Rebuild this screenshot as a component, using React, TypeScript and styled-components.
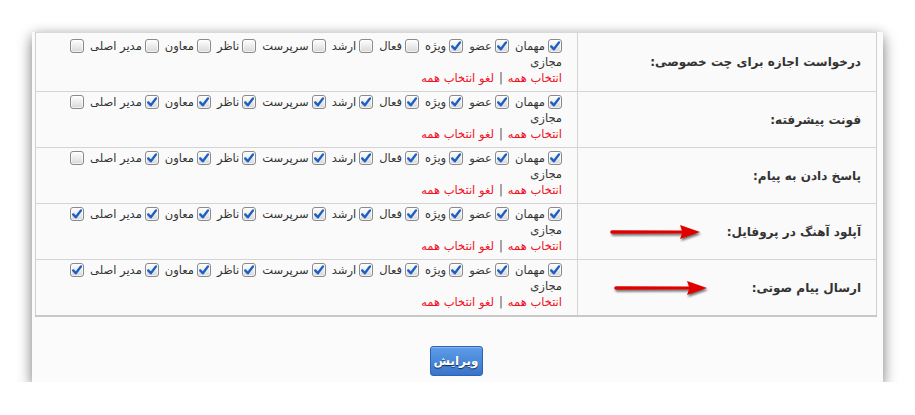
import React from 'react';
import styled, { createGlobalStyle } from 'styled-components';

const GlobalStyle = createGlobalStyle`
    html, body {
        margin: 0;
        padding: 0;
        background: #ffffff;
    }
    body {
        font-family: 'DejaVu Sans', Tahoma, sans-serif;
        font-size: 12px;
        color: #333;
    }
`;

const roles = [
    'مهمان',
    'عضو',
    'ویژه',
    'فعال',
    'ارشد',
    'سرپرست',
    'ناظر',
    'معاون',
    'مدیر اصلی',
    'مجازی',
];

interface PermissionRow {
    title: string;
    checked: boolean[];
    arrow?: { left: number; width: number };
}

const all = (except: number[] = []) => roles.map((_, i) => !except.includes(i));

const rows: PermissionRow[] = [
    {
        title: 'درخواست اجازه برای چت خصوصی:',
        checked: [true, true, true, false, false, false, false, false, false, false],
    },
    { title: 'فونت پیشرفته:', checked: all([9]) },
    { title: 'پاسخ دادن به پیام:', checked: all([9]) },
    { title: 'آپلود آهنگ در پروفایل:', checked: all(), arrow: { left: 31, width: 93 } },
    { title: 'ارسال پیام صوتی:', checked: all(), arrow: { left: 35, width: 96 } },
];

const CheckBox = ({ checked }: { checked: boolean }) => (
    <Box>
        {checked && (
            <svg width="12" height="12" viewBox="0 0 12 12">
                <path
                    d="M2.2 6.4 L4.8 9.3 L10 2.4"
                    fill="none"
                    stroke="#1c5fc4"
                    strokeWidth="2.4"
                    strokeLinecap="round"
                    strokeLinejoin="round"
                />
            </svg>
        )}
    </Box>
);

const Arrow = ({ left, width }: { left: number; width: number }) => (
    <ArrowWrap $left={left} $width={width}>
        <svg width={width} height="20" viewBox={`0 0 ${width} 20`}>
            <path
                d={`M3 8.2 L${width - 20} 8.6 L${width - 22} 3 L${width - 2} 10 L${width - 22} 17 L${width - 20} 11.4 L3 11.8 A1.8 1.8 0 0 1 3 8.2 Z`}
                fill="#e10000"
            />
        </svg>
    </ArrowWrap>
);

export default function App() {
    return (
        <Page>
            <GlobalStyle />
            <Panel>
                <Table>
                    <tbody>
                        {rows.map((row, r) => (
                            <Row key={r}>
                                <LabelCell $first={r === 0}>
                                    {row.title}
                                    {row.arrow && <Arrow {...row.arrow} />}
                                </LabelCell>
                                <OptionsCell $first={r === 0}>
                                    <Options>
                                        {roles.map((role, i) => (
                                            <React.Fragment key={role}>
                                                <CheckBox checked={row.checked[i]} />
                                                <RoleName $break={i === roles.length - 1}>
                                                    {role}
                                                </RoleName>
                                            </React.Fragment>
                                        ))}
                                    </Options>
                                    <Links>
                                        <RedLink>انتخاب همه</RedLink>
                                        <Sep>|</Sep>
                                        <RedLink>لغو انتخاب همه</RedLink>
                                    </Links>
                                </OptionsCell>
                            </Row>
                        ))}
                    </tbody>
                </Table>
                <Footer>
                    <EditButton>ویرایش</EditButton>
                </Footer>
            </Panel>
        </Page>
    );
}

const Page = styled.div`
    padding: 32px 32px 0 32px;
    direction: rtl;
`;

const Panel = styled.div`
    width: 851px;
    box-sizing: border-box;
    padding: 0 6px 0 3px;
    background: #fbfbfb;
    box-shadow: 0 6px 14px rgba(0, 0, 0, 0.45), 0 0 10px rgba(0, 0, 0, 0.12);
`;

const Table = styled.table`
    width: 842px;
    border-collapse: collapse;
    table-layout: fixed;
    background: #fafafa;
    border: 1px solid #cfcfcf;
    border-top-color: #d8d8d8;
    border-bottom: 2px solid #c8c8c8;
`;

const Row = styled.tr`
    & + & td {
        border-top: 1px solid #d4d4d4;
    }
`;

const LabelCell = styled.td<{ $first: boolean }>`
    position: relative;
    width: 283px;
    height: ${({ $first }) => ($first ? 58 : 55)}px;
    padding: 0 15px 0 0;
    border-left: 1px solid #d4d4d4;
    text-align: right;
    vertical-align: middle;
    font-weight: bold;
    font-size: 12px;
    color: #333;
    white-space: nowrap;
`;

const OptionsCell = styled.td<{ $first: boolean }>`
    padding: ${({ $first }) => ($first ? 5 : 2)}px 15px 4px 0;
    vertical-align: top;
    text-align: right;
`;

const Options = styled.div`
    display: flex;
    flex-wrap: wrap;
    align-items: center;
    line-height: 16px;
`;

const Box = styled.span`
    display: inline-flex;
    align-items: center;
    justify-content: center;
    flex: none;
    box-sizing: border-box;
    width: 14px;
    height: 14px;
    margin: 0 0 0 3px;
    border: 1px solid #8a8a8a;
    border-radius: 3px;
    background: linear-gradient(#ffffff, #d8d8d8);
    box-shadow: inset 0 0 0 1px rgba(255, 255, 255, 0.6);
`;

const RoleName = styled.span<{ $break: boolean }>`
    margin-left: 6px;
    color: #333;
    font-size: 11.5px;
    line-height: 16px;
    white-space: nowrap;
    ${({ $break }) => $break && 'flex-basis: 100%; order: 1;'}
`;

const Links = styled.div`
    line-height: 16px;
    font-size: 11.5px;
`;

const RedLink = styled.span`
    color: #f0101e;
`;

const Sep = styled.span`
    color: #555;
    margin: 0 5px;
`;

const ArrowWrap = styled.span<{ $left: number; $width: number }>`
    position: absolute;
    left: ${({ $left }) => $left}px;
    top: 50%;
    width: ${({ $width }) => $width}px;
    height: 20px;
    transform: translateY(-50%);
    filter: drop-shadow(1px 2px 1.2px rgba(0, 0, 0, 0.55));
    svg {
        display: block;
    }
`;

const Footer = styled.div`
    display: flex;
    justify-content: center;
    padding: 29px 0 6px;
`;

const EditButton = styled.button`
    width: 53px;
    height: 30px;
    padding: 0;
    border: 1px solid #2d62b4;
    border-radius: 3px;
    background: linear-gradient(#5c9de8, #3a74ca);
    color: #fff;
    font-family: 'DejaVu Sans', Tahoma, sans-serif;
    font-weight: bold;
    font-size: 12px;
    text-shadow: 0 1px 1px rgba(0, 0, 0, 0.7);
    box-shadow: inset 0 1px 0 rgba(255, 255, 255, 0.25);
`;
